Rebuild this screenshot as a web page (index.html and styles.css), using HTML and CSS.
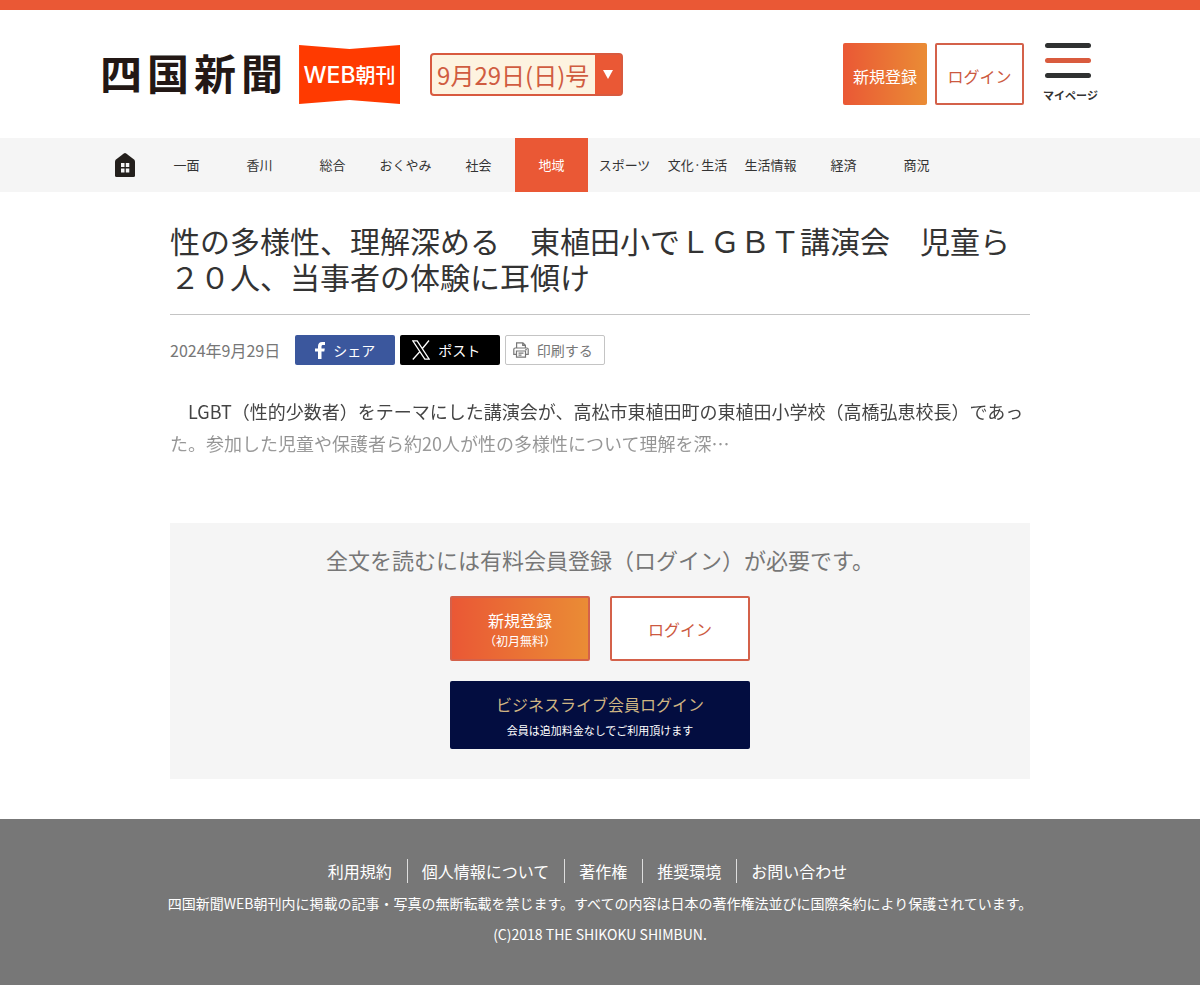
FILE: index.html
```html
<!DOCTYPE html>
<html lang="ja">
<head>
<meta charset="utf-8">
<meta name="viewport" content="width=device-width, initial-scale=1">
<title>四国新聞WEB朝刊</title>
<link rel="stylesheet" href="styles.css">
</head>
<body>
<header class="header">
  <div class="header-inner">
    <a class="logo" href="#">
      <span class="logo-name"><span>四</span><span>国</span><span>新</span><span>聞</span></span>
      <span class="logo-badge"><span class="logo-web">WEB</span>朝刊</span>
    </a>
    <div class="issue">
      <select class="issue-select" aria-label="発行日"><option>9月29日(日)号</option></select>
      <span class="issue-arrow" aria-hidden="true"><svg width="10" height="9" viewBox="0 0 10 9"><path d="M0 0h10L5 9z" fill="#fff"/></svg></span>
    </div>
    <div class="account">
      <a class="btn btn-fill header-join" href="#">新規登録</a>
      <a class="btn btn-line header-login" href="#">ログイン</a>
      <button class="menu" type="button">
        <span class="bar"></span><span class="bar bar-accent"></span><span class="bar"></span>
        <span class="menu-label">マイページ</span>
      </button>
    </div>
  </div>
</header>
<nav class="nav">
  <ul class="nav-list">
    <li class="nav-home"><a href="#" aria-label="ホーム"><svg width="20" height="24" viewBox="0 0 20 24"><path d="M8.800.500Q10-.300 11.200.500L19 6.500Q20 7.300 20 8.500V22.500Q20 24 18.500 24H1.500Q0 24 0 22.500V8.500Q0 7.300 1 6.500Z" fill="#231f1c"/><path d="M6 10h3.500v4H6zM10.800 10h3.500v4h-3.500zM6 15.500h3.500v4H6zM10.800 15.500h3.500v4h-3.500z" fill="#f5f5f5"/></svg></a></li>
    <li><a href="#">一面</a></li>
    <li><a href="#">香川</a></li>
    <li><a href="#">総合</a></li>
    <li><a href="#">おくやみ</a></li>
    <li><a href="#">社会</a></li>
    <li><a class="current" href="#">地域</a></li>
    <li><a href="#">スポーツ</a></li>
    <li><a href="#">文化·生活</a></li>
    <li><a href="#">生活情報</a></li>
    <li><a href="#">経済</a></li>
    <li><a href="#">商況</a></li>
  </ul>
</nav>
<main class="main">
  <article>
    <h1 class="title">性の多様性、理解深める　東植田小でＬＧＢＴ講演会　児童ら２０人、当事者の体験に耳傾け</h1>
    <div class="meta">
      <time class="date" datetime="2024-09-29">2024年9月29日</time>
      <div class="share">
        <a class="share-btn share-fb" href="#"><svg width="10" height="17" viewBox="0 0 10 17"><path d="M3 17V9.500H0V6.500h3V4.300C3 1.500 4.600 0 7.200 0H10v3H8.200C7 3 6.500 3.500 6.500 4.500v2h3.300l-.5 3H6.500V17z" fill="#fff"/></svg>シェア</a>
        <a class="share-btn share-x" href="#"><svg width="18" height="20" viewBox="0 0 18 20"><path d="M.8.800h4.400l12 18.400h-4.400zM17 .5 10 9M8 11.500.8 19.500" fill="none" stroke="#fff" stroke-width="1.300"/></svg>ポスト</a>
        <button class="share-btn share-print" type="button"><svg width="16" height="16" viewBox="0 0 16 16" fill="none" stroke="#777" stroke-width="1.200"><path d="M3.600 6V.8h6.300L12.400 3.200V6M9.700.8v2.600h2.700M3.400 12.400H.8V7.300Q.8 6 2.200 6h11.600q1.400 0 1.400 1.300v5.100h-2.600M3.500 9h9v6.200h-9zM5.500 11.200h5M5.500 13.200h3M12.300 7.600h1.500"/></svg>印刷する</button>
      </div>
    </div>
    <p class="lead">　LGBT（性的少数者）をテーマにした講演会が、高松市東植田町の東植田小学校（高橋弘恵校長）であった。参加した児童や保護者ら約20人が性の多様性について理解を深…</p>
  </article>
  <section class="paywall">
    <p class="paywall-text">全文を読むには有料会員登録（ログイン）が必要です。</p>
    <div class="paywall-actions">
      <a class="btn btn-fill btn-framed" href="#">新規登録<small>（初月無料）</small></a>
      <a class="btn btn-line" href="#">ログイン</a>
      <a class="btn btn-business" href="#">ビジネスライブ会員ログイン<small>会員は追加料金なしでご利用頂けます</small></a>
    </div>
  </section>
</main>
<footer class="footer">
  <ul class="footer-links">
    <li><a href="#">利用規約</a></li>
    <li><a href="#">個人情報について</a></li>
    <li><a href="#">著作権</a></li>
    <li><a href="#">推奨環境</a></li>
    <li><a href="#">お問い合わせ</a></li>
  </ul>
  <p>四国新聞WEB朝刊内に掲載の記事・写真の無断転載を禁じます。すべての内容は日本の著作権法並びに国際条約により保護されています。</p>
  <p>(C)2018 THE SHIKOKU SHIMBUN.</p>
</footer>
</body>
</html>
```
FILE: styles.css
```css
* { box-sizing: border-box; }
body {
  margin: 0;
  background: #fff;
  color: #333;
  font-family: "Noto Sans CJK JP", sans-serif;
  font-size: 16px;
  line-height: 24px;
}
a { color: inherit; text-decoration: none; }
button, select { font-family: inherit; cursor: pointer; }
ul { list-style: none; margin: 0; padding: 0; }
svg { display: block; flex: none; }

.header { border-top: 10px solid #ea5835; }
.header-inner {
  display: flex;
  align-items: flex-start;
  max-width: 1000px;
  min-height: 128px;
  margin: 0 auto;
  padding-top: 33px;
}
.logo { display: flex; align-items: flex-start; gap: 16px; padding-top: 2px; }
.logo-name {
  display: flex;
  gap: 5px;
  color: #231815;
  font-size: 42px;
  font-weight: 700;
  line-height: 54px;
}
.logo-badge {
  display: flex;
  align-items: center;
  justify-content: center;
  width: 101px;
  height: 59px;
  background: #ff3a00;
  clip-path: polygon(0 0, 50% 4px, 100% 0, 100% 100%, 50% 55px, 0 100%);
  color: #fff;
  font-size: 20px;
  font-weight: 500;
}
.logo-web { font-family: Inter, sans-serif; font-size: 23px; }

.issue {
  display: flex;
  height: 43px;
  margin: 10px 0 0 30px;
  border: 2px solid #d85a3f;
  border-radius: 4px;
  background: #fdf3e0;
}
.issue-select {
  appearance: none;
  width: 163px;
  padding: 0 5px;
  border: 0;
  background: none;
  color: #d05c40;
  font-size: 24px;
}
.issue-arrow {
  display: flex;
  align-items: center;
  justify-content: center;
  width: 26px;
  background: #ea5835;
}

.btn {
  display: flex;
  flex-direction: column;
  align-items: center;
  justify-content: center;
  border-radius: 2px;
}
.btn-fill { background: linear-gradient(90deg, #ea5835, #ea8c35); color: #fff; }
.btn-framed, .btn-line { border: 2px solid #d4614a; }
.btn-line { background: #fff; color: #cc5940; }

.account { display: flex; margin-left: auto; }
.header-join, .header-login { height: 62px; padding-top: 4px; }
.header-join { width: 84px; margin-right: 8px; }
.header-login { width: 89px; margin-right: 17px; }
.menu {
  display: flex;
  flex-direction: column;
  gap: 10px;
  width: 59px;
  padding: 0 2px;
  border: 0;
  background: none;
  color: #333;
}
.bar { width: 46px; height: 5px; margin-left: 2px; border-radius: 3px; background: #2f3131; }
.bar-accent { background: #d95b3e; }
.menu-label { font-size: 11px; font-weight: 700; line-height: 14px; white-space: nowrap; }

.nav { background: #f5f5f5; }
.nav-list { display: flex; max-width: 1000px; margin: 0 auto; }
.nav-list li { width: 73px; }
.nav-list .nav-home { width: 50px; }
.nav-list a {
  display: flex;
  align-items: center;
  justify-content: center;
  height: 54px;
  font-size: 13px;
  white-space: nowrap;
}
.nav-list .current { background: #ea5835; color: #fff; }

.main { max-width: 860px; margin: 0 auto; padding: 30px 0 40px; }
.title {
  margin: 0 0 20px;
  padding-bottom: 20px;
  border-bottom: 1px solid #c4c4c4;
  font-size: 30px;
  font-weight: 400;
  line-height: 36px;
}
.meta { display: flex; align-items: center; gap: 15px; }
.date { color: #777; }
.share { display: flex; gap: 5px; }
.share-btn {
  display: flex;
  align-items: center;
  justify-content: center;
  gap: 8px;
  width: 100px;
  height: 30px;
  padding: 0;
  border-radius: 2px;
  color: #fff;
  font-size: 14px;
}
.share-fb { background: #3b579d; }
.share-x { padding-right: 8px; background: #000; }
.share-print { padding-right: 5px; border: 1px solid #c4c4c4; background: #fff; color: #777; }
.lead {
  margin: 30px 0 64px;
  color: #444;
  font-size: 18px;
  line-height: 32px;
  mask-image: linear-gradient(#000 40%, rgb(0 0 0 / 60%) 60%, rgb(0 0 0 / 50%));
}

.paywall { padding: 20px 20px 30px; background: #f5f5f5; }
.paywall-text {
  margin: 0 0 21px;
  color: #777;
  font-size: 22px;
  line-height: 32px;
  text-align: center;
}
.paywall-actions {
  display: grid;
  grid-template-columns: 140px 140px;
  gap: 20px;
  justify-content: center;
}
.paywall-actions .btn { min-height: 65px; }
.paywall-actions small { font-size: 12px; line-height: 17px; }
.paywall-actions .btn-business {
  grid-column: span 2;
  gap: 6px;
  min-height: 68px;
  background: #030d40;
  color: #cfb583;
}
.paywall-actions .btn-business small { color: #fff; font-size: 11px; }

.footer {
  padding: 40px 20px 35px;
  background: #777;
  color: #fff;
  font-size: 14px;
  text-align: center;
}
.footer-links {
  display: flex;
  flex-wrap: wrap;
  justify-content: center;
  margin-bottom: 5px;
  padding-right: 24px;
  font-size: 16px;
}
.footer-links li { padding: 0 15px 0 14px; }
.footer-links li + li { border-left: 1px solid #ddd; }
.footer p { margin: 0; line-height: 31px; }
```
